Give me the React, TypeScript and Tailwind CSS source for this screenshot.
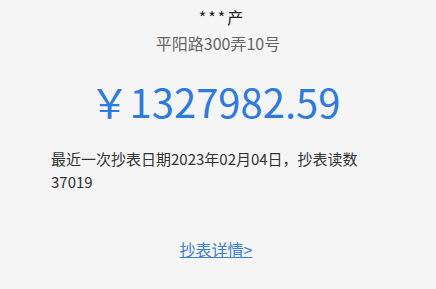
export default function App() {
  return (
    <div
      className="w-[436px] h-[289px] bg-[#f5f5f5] overflow-hidden flex flex-col"
      style={{ fontFamily: '"Noto Sans CJK SC", "Noto Sans", sans-serif' }}
    >
      <div className="pt-[5px] text-center text-[16px] leading-[24px] text-[#222]">
        <span className="tracking-[2px] pl-[6px]">***</span>产
      </div>
      <div className="mt-[4px] text-center text-[16px] leading-[20px] text-[#666]">平阳路300弄10号</div>
      <div className="mt-[20px] pr-[6px] text-center text-[40px] leading-[56px] text-[#2d7be0]">￥1327982.59</div>
      <div className="mt-[18px] px-[51px] text-[15px] leading-[23px] text-[#333]">
        最近一次抄表日期2023年02月04日，抄表读数37019
      </div>
      <div className="mt-[44px] pr-[4px] text-center text-[16px] leading-[24px]">
        <a className="text-[#3a80d9] underline">抄表详情&gt;</a>
      </div>
    </div>
  );
}
